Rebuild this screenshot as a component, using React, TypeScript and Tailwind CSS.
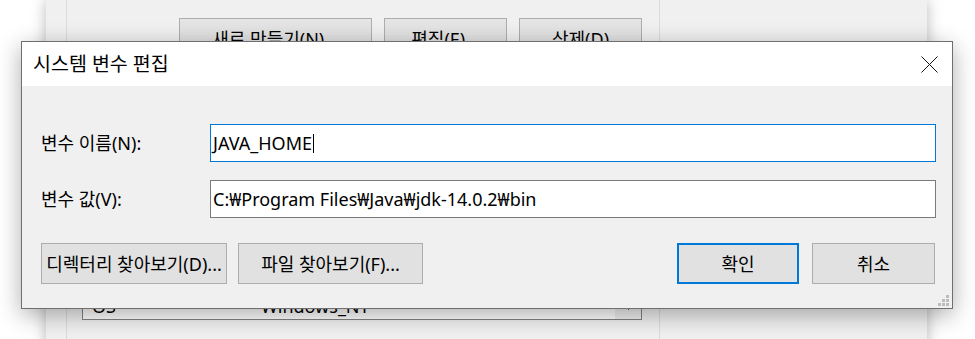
import React from "react";

const font = "font-['Noto_Sans','Noto_Sans_CJK_KR',sans-serif]";

function GrayButton({ label, className }: { label: string; className: string }) {
  return (
    <div
      className={`flex h-[41px] items-center justify-center border border-[#adadad] bg-[#e1e1e1] text-[18px] leading-none text-black ${className}`}
    >
      {label}
    </div>
  );
}

function ResizeGrip() {
  const dots = [
    [8, 0],
    [4, 4],
    [8, 4],
    [0, 8],
    [4, 8],
    [8, 8],
  ];
  return (
    <svg width="11" height="11" viewBox="0 0 11 11" className="absolute bottom-[2px] right-[3px]">
      {dots.map(([x, y], i) => (
        <rect key={i} x={x} y={y} width="3" height="3" fill="#bcbcbc" />
      ))}
    </svg>
  );
}

export default function App() {
  return (
    <div className={`relative h-[339px] w-[975px] overflow-hidden bg-white ${font} text-black`}>
      {/* system properties window behind */}
      <div className="absolute left-[46px] top-0 h-[380px] w-[881px] bg-[#f0f0f0] shadow-[0_0_14px_rgba(0,0,0,0.28)]" />

      {/* environment variables window */}
      <div className="absolute left-[66px] top-0 flex h-[380px] w-[594px] flex-col border-x border-[#dadada] bg-[#f0f0f0] pb-[60px] pl-[15px] pr-[17px] pt-[18px]">
        <div className="flex justify-end gap-[12px]">
          <GrayButton label="새로 만들기(N)..." className="w-[193px] bg-gradient-to-b from-[#e5e5e5] to-[#dcdcdc]" />
          <GrayButton label="편집(E)..." className="w-[123px] bg-gradient-to-b from-[#e5e5e5] to-[#dcdcdc]" />
          <GrayButton label="삭제(D)" className="w-[123px] bg-gradient-to-b from-[#e5e5e5] to-[#dcdcdc]" />
        </div>
        <div className="mt-[60px] flex flex-1 border border-[#828282] bg-white">
          <div className="flex flex-1 flex-col justify-end text-[18px] leading-none">
            <div className="flex h-[26px] items-center">
              <span className="w-[178px] pl-[9px]">OS</span>
              <span>Windows_NT</span>
            </div>
          </div>
          <div className="flex w-[26px] flex-col justify-end bg-[#f0f0f0]">
            <div className="mx-auto mb-[9px] h-[5px] w-px bg-[#606060]" />
          </div>
        </div>
      </div>

      {/* edit system variable dialog */}
      <div className="absolute left-[21px] top-[41px] flex h-[268px] w-[932px] flex-col border border-[#6f6f6f] bg-[#f0f0f0] shadow-[0_6px_22px_rgba(0,0,0,0.32)]">
        <div className="flex h-[44px] items-center justify-between bg-white pl-[11px]">
          <span className="text-[19.5px] leading-none">시스템 변수 편집</span>
          <div className="flex h-full w-[46px] items-center justify-center">
            <svg width="17" height="17" viewBox="0 0 17 17">
              <path d="M0.5 0.5L16.5 16.5M16.5 0.5L0.5 16.5" stroke="#111" strokeWidth="1" />
            </svg>
          </div>
        </div>

        <div className="relative flex flex-1 flex-col pl-[19px] pr-[16px] pt-[38px] text-[18px]">
          <div className="flex h-[38px] items-center">
            <span className="w-[169px]">변수 이름(N):</span>
            <div className="flex h-full flex-1 items-center border border-[#0078d7] bg-white pl-[2px]">
              <span className="leading-none">JAVA_HOME</span>
              <span className="ml-px inline-block h-[19px] w-px bg-black" />
            </div>
          </div>

          <div className="mt-[18px] flex h-[38px] items-center">
            <span className="w-[169px]">변수 값(V):</span>
            <div className="flex h-full flex-1 items-center border border-[#7a7a7a] bg-white pl-[2px]">
              <span className="leading-none">C:₩Program Files₩Java₩jdk-14.0.2₩bin</span>
            </div>
          </div>

          <div className="mt-[25px] flex items-center pr-px">
            <GrayButton label="디렉터리 찾아보기(D)..." className="w-[186px] whitespace-nowrap" />
            <GrayButton label="파일 찾아보기(F)..." className="ml-[11px] w-[185px]" />
            <div className="flex-1" />
            <div className="flex h-[41px] w-[122px] items-center justify-center border-2 border-[#0078d7] bg-[#e1e1e1] text-[18px] leading-none">
              확인
            </div>
            <GrayButton label="취소" className="ml-[13px] w-[123px]" />
          </div>

          <ResizeGrip />
        </div>
      </div>
    </div>
  );
}
